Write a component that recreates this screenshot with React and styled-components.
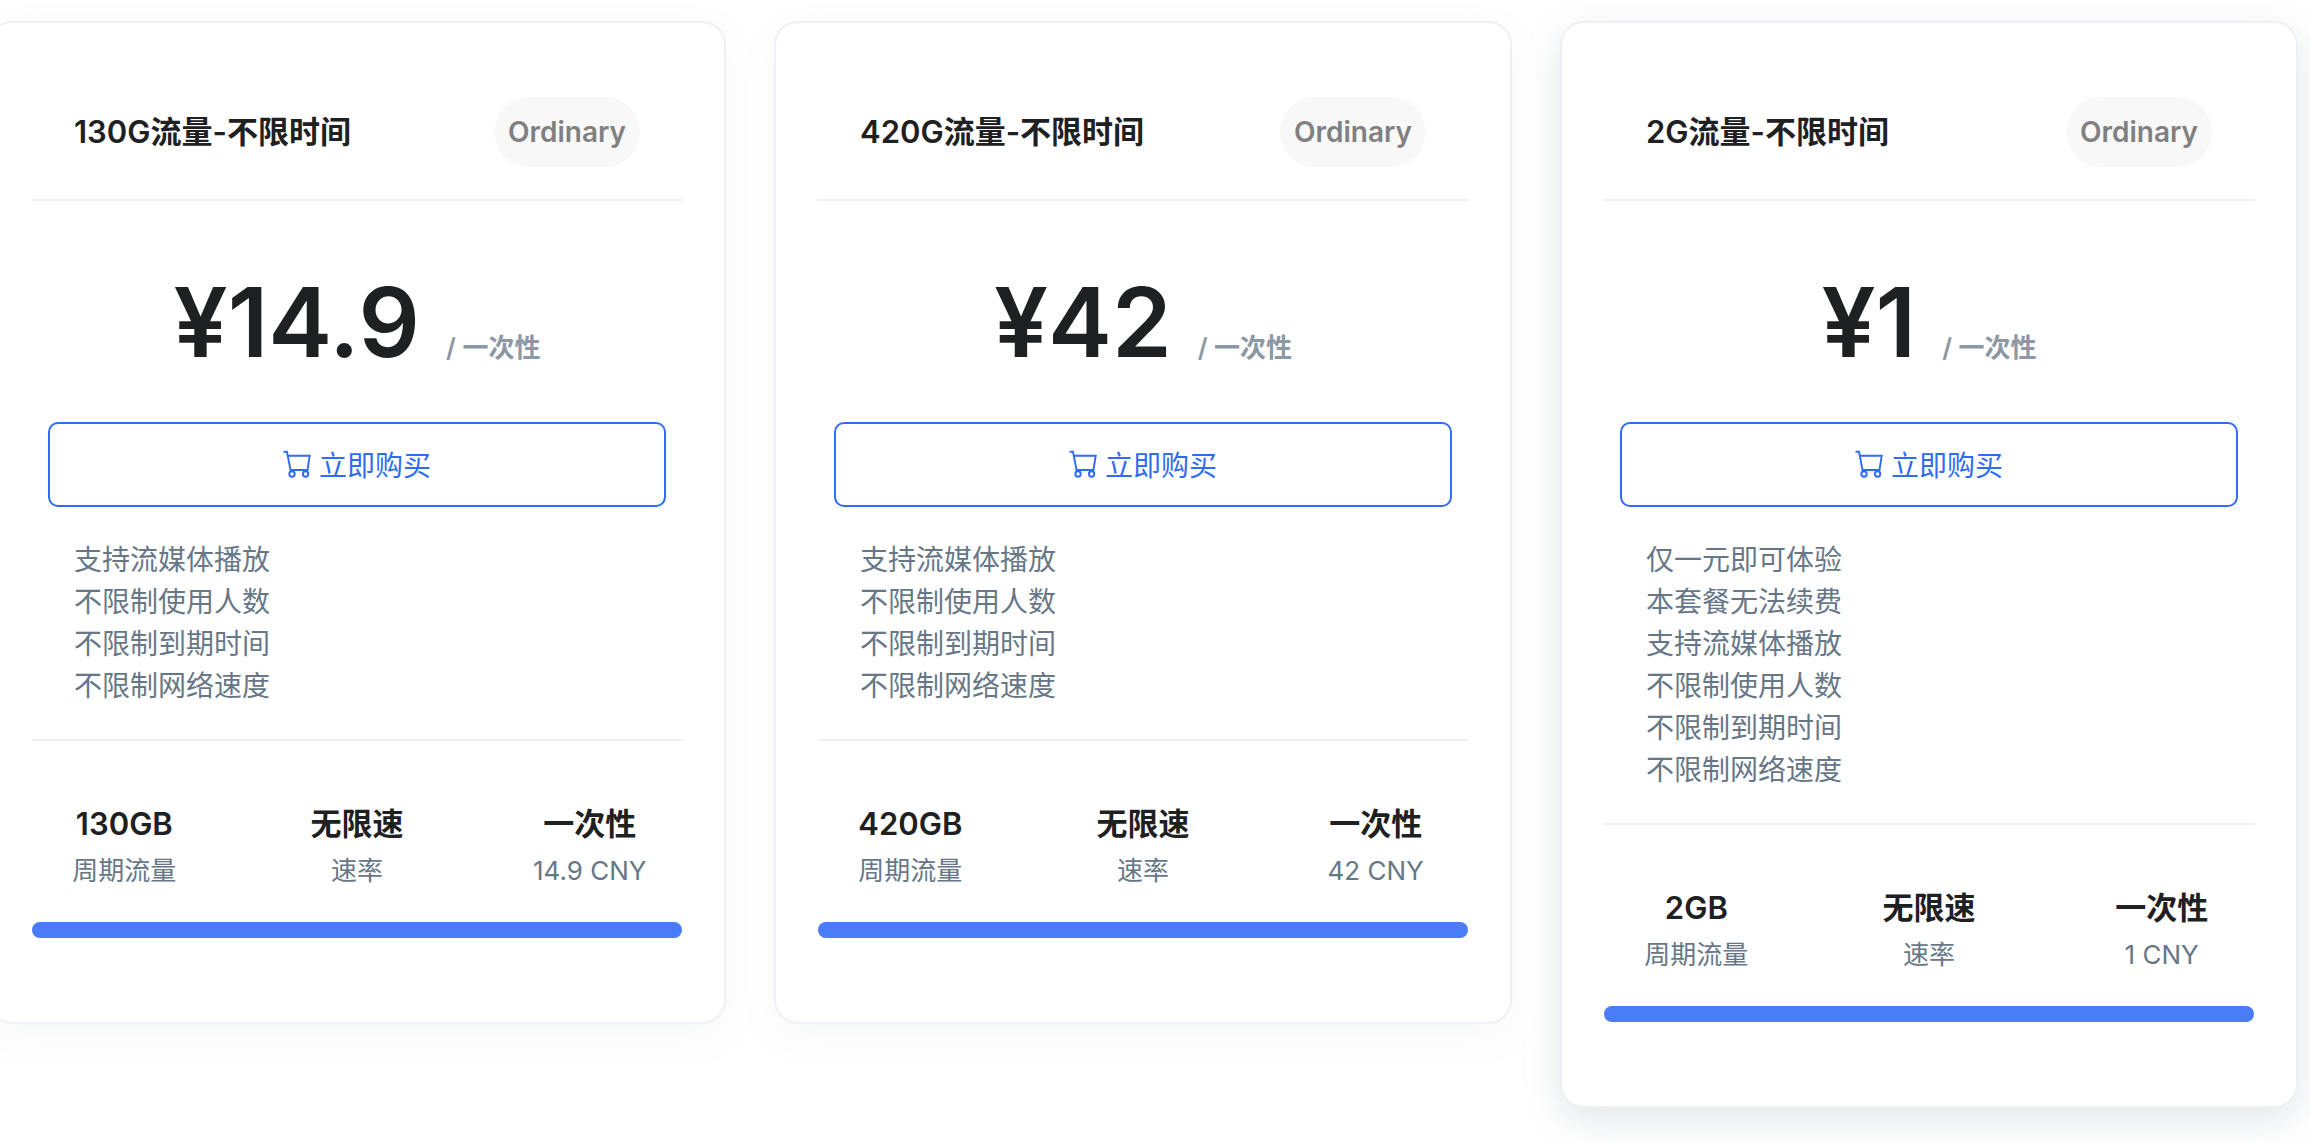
import React from "react";
import styled, { createGlobalStyle } from "styled-components";

const GlobalStyle = createGlobalStyle`
	* {
		box-sizing: border-box;
	}
	body {
		margin: 0;
		background-color: #fff;
		color: #677788;
		font-family: Inter, "Noto Sans CJK SC", sans-serif;
		font-size: 28px;
		line-height: 42px;
		overflow-x: hidden;
	}
`;

const PlanList = styled.main`
	display: grid;
	grid-template-columns: repeat(3, 1fr);
	align-items: start;
	gap: 48px;
	margin: 0 12px 0 -12px;
	padding: 21px 0 34px;
`;

const Card = styled.article`
	padding: 0 42px 84px;
	border: 2px solid #efeff5;
	border-radius: 24px;
	background-color: #fff;
	box-shadow: ${({ $raised }) =>
		$raised ? "0 12px 36px rgba(140, 152, 164, 0.24)" : "0 12px 36px rgba(140, 152, 164, 0.08)"};
`;

const CardHeader = styled.header`
	display: flex;
	justify-content: space-between;
	align-items: center;
	padding: 74px 42px 32px;
	border-bottom: 2px solid #efeff5;
`;

const Title = styled.h2`
	margin: 0;
	color: #1e2022;
	font-size: 31px;
	font-weight: 600;
`;

const Badge = styled.span`
	padding: 14px;
	border-radius: 35px;
	background-color: #f8f8f8;
	color: #808080;
	font-weight: 600;
`;

const Price = styled.p`
	display: flex;
	justify-content: center;
	align-items: baseline;
	gap: 26px;
	margin: 0;
	padding: 62px 0 41px;
	color: #1e2022;
	font-size: 96px;
	font-weight: 600;
	line-height: 118px;
`;

const Period = styled.span`
	color: #8c98a4;
	font-size: 26px;
	line-height: 42px;
`;

const BuyButton = styled.button`
	display: flex;
	justify-content: center;
	align-items: center;
	gap: 8px;
	width: calc(100% - 32px);
	height: 85px;
	margin: 0 16px;
	padding: 0 0 2px;
	border: 2px solid #2f6bf6;
	border-radius: 10px;
	background-color: #fff;
	color: #2f6bf6;
	font-family: inherit;
	font-size: 28px;
	cursor: pointer;
`;

const Features = styled.ul`
	margin: 0;
	padding: 32px 42px;
	border-bottom: 2px solid #efeff5;
	list-style: none;
`;

const Stats = styled.dl`
	display: grid;
	grid-template-columns: repeat(3, 1fr);
	margin: 0 -24px;
	padding: 60px 0 27px;
	text-align: center;
`;

const Stat = styled.div`
	display: flex;
	flex-direction: column-reverse;
`;

const StatLabel = styled.dt`
	font-size: 26px;
	line-height: 48px;
`;

const StatValue = styled.dd`
	margin: 0;
	color: #1e2022;
	font-size: 31px;
	font-weight: 600;
	line-height: 46px;
`;

const Bar = styled.div`
	height: 16px;
	border-radius: 8px;
	background-color: #4a7cf7;
`;

const CartIcon = () => (
	<svg width="28" height="28" viewBox="0 0 28 28" fill="none" stroke="currentColor" strokeWidth="1.9" aria-hidden="true">
		<path d="M0.500 1.800h3.500l3.500 18.200h17l2.200-14.200H4.800" />
		<circle cx="9" cy="24" r="2.700" />
		<circle cx="22.600" cy="24" r="2.700" />
	</svg>
);

const basics = ["支持流媒体播放", "不限制使用人数", "不限制到期时间", "不限制网络速度"];

const plans = [
	{ traffic: "130G", price: "14.9", features: basics },
	{ traffic: "420G", price: "42", features: basics },
	{ traffic: "2G", price: "1", features: ["仅一元即可体验", "本套餐无法续费", ...basics], raised: true },
];

const PlanCard = ({ traffic, price, features, raised }) => {
	const stats = [
		{ value: `${traffic}B`, label: "周期流量" },
		{ value: "无限速", label: "速率" },
		{ value: "一次性", label: `${price} CNY` },
	];

	return (
		<Card $raised={raised}>
			<CardHeader>
				<Title>{traffic}流量-不限时间</Title>
				<Badge>Ordinary</Badge>
			</CardHeader>
			<Price>
				¥{price}
				<Period>/ 一次性</Period>
			</Price>
			<BuyButton type="button">
				<CartIcon />
				立即购买
			</BuyButton>
			<Features>
				{features.map((feature) => (
					<li key={feature}>{feature}</li>
				))}
			</Features>
			<Stats>
				{stats.map(({ value, label }) => (
					<Stat key={label}>
						<StatLabel>{label}</StatLabel>
						<StatValue>{value}</StatValue>
					</Stat>
				))}
			</Stats>
			<Bar />
		</Card>
	);
};

const App = () => (
	<>
		<GlobalStyle />
		<PlanList>
			{plans.map((plan) => (
				<PlanCard key={plan.traffic} {...plan} />
			))}
		</PlanList>
	</>
);

export default App;
